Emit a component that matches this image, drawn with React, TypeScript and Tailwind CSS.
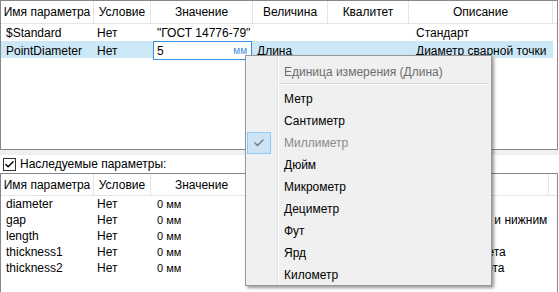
import { Check } from "lucide-react";

type Row = { name: string; cond: string; value: string; unit?: string; kind?: string; desc: string };

const topRows: Row[] = [
  { name: "$Standard", cond: "Нет", value: "\"ГОСТ 14776-79\"", desc: "Стандарт" },
  { name: "PointDiameter", cond: "Нет", value: "5", unit: "мм", kind: "Длина", desc: "Диаметр сварной точки" },
];

const inherited: Row[] = [
  { name: "diameter", cond: "Нет", value: "0 мм", desc: "" },
  { name: "gap", cond: "Нет", value: "0 мм", desc: "Зазор между верхним и нижним пакетом" },
  { name: "length", cond: "Нет", value: "0 мм", desc: "" },
  { name: "thickness1", cond: "Нет", value: "0 мм", desc: "Толщина первого пакета" },
  { name: "thickness2", cond: "Нет", value: "0 мм", desc: "Толщина второго пакета" },
];

const units = ["Метр", "Сантиметр", "Миллиметр", "Дюйм", "Микрометр", "Дециметр", "Фут", "Ярд", "Километр"];

const cols = "grid grid-cols-[93px_57px_102px_75px_81px_144px_1fr]";
const lowerCols = "grid grid-cols-[93px_57px_102px_60px_53px_183px_1fr]";

export default function App() {
  return (
    <div
      className="relative h-[292px] w-[559px] overflow-hidden bg-white text-[12px] leading-none text-black"
      style={{ fontFamily: '"Liberation Sans", Arial, sans-serif' }}
    >
      {/* parameters grid */}
      <div className="h-[150px] w-[558px] border border-[#828790]">
        <div className={`${cols} h-[23px] border-b border-[#e5e5e5] bg-white`}>
          {["Имя параметра", "Условие", "Значение", "Величина", "Квалитет", "Описание", ""].map((label, i) => (
            <div
              key={i}
              className={`flex items-center justify-center overflow-hidden whitespace-nowrap ${i < 6 ? "border-r border-[#e5e5e5]" : ""}`}
            >
              {label}
            </div>
          ))}
        </div>
        {topRows.map((row) => {
          const selected = !!row.unit;
          return (
            <div key={row.name} className={`${cols} h-[17px] items-center ${selected ? "bg-[#cce8f6]" : ""}`}>
              <div className="whitespace-nowrap pl-[5px]">{row.name}</div>
              <div className="pl-[3px]">{row.cond}</div>
              <div className="flex h-full items-center">
                {row.unit ? (
                  <div className="ml-[2px] flex h-[19px] w-[99px] items-center justify-between border border-[#3d8ee0] bg-white pl-[3px] pr-[4px]">
                    <span>{row.value}</span>
                    <span className="text-[10px] text-[#3c8ce0]">{row.unit}</span>
                  </div>
                ) : (
                  <span className="pl-[6px]">{row.value}</span>
                )}
              </div>
              <div className="pl-[4px]">{row.kind ?? ""}</div>
              <div />
              <div className="whitespace-nowrap pl-[7px]">{row.desc}</div>
              <div className={selected ? "h-full bg-white" : ""} />
            </div>
          );
        })}
      </div>

      <div className="h-[5px] bg-[#f0f0f0]" />

      <label className="flex h-[18px] items-center gap-[4px] pl-[3px]">
        <span className="flex h-[13px] w-[13px] items-center justify-center border border-[#333]">
          <Check size={11} strokeWidth={3} className="text-black" />
        </span>
        <span>Наследуемые параметры:</span>
      </label>

      {/* inherited grid */}
      <div className="h-[130px] w-[558px] border border-[#828790]">
        <div className={`${lowerCols} h-[22px] border-b border-[#e5e5e5]`}>
          {["Имя параметра", "Условие", "Значение", "", "", "", ""].map((label, i) => (
            <div
              key={i}
              className={`flex items-center justify-center whitespace-nowrap ${i < 6 ? "border-r border-[#e5e5e5]" : ""}`}
            >
              {label}
            </div>
          ))}
        </div>
        {inherited.map((row) => (
          <div key={row.name} className={`${lowerCols} h-[16px] items-center`}>
            <div className="pl-[5px]">{row.name}</div>
            <div className="pl-[3px]">{row.cond}</div>
            <div className="pl-[6px] text-[11px]">{row.value}</div>
            <div />
            <div />
            <div className="overflow-hidden whitespace-nowrap pl-[3px]">{row.desc}</div>
            <div />
          </div>
        ))}
      </div>

      {/* unit popup menu */}
      <div className="absolute left-[245px] top-[55px] h-[231px] w-[247px] border border-[#979797] bg-[#f0f0f0] shadow-[2px_2px_3px_rgba(0,0,0,0.4)]">
        <div className="absolute bottom-0 left-[31px] top-0 w-[1px] bg-[#e2e3e3]" />
        <div className="absolute bottom-0 left-[32px] top-0 w-[1px] bg-white" />
        <div className="relative pt-[5px]">
          <div className="flex h-[22px] items-center pl-[38px] text-[#6d6d6d]">Единица измерения (Длина)</div>
          <div className="ml-[33px] mr-[2px] h-[1px] bg-[#d7d7d7]" />
          <div className="mb-[3px] ml-[33px] mr-[2px] h-[1px] bg-white" />
          {units.map((u) => {
            const checked = u === "Миллиметр";
            return (
              <div key={u} className="relative flex h-[22px] items-center pl-[38px]">
                {checked ? (
                  <span className="absolute left-[1px] top-0 flex h-[22px] w-[24px] items-center justify-center border border-[#90c8f6] bg-[#cce4f7]">
                    <Check size={12} strokeWidth={3} className="text-[#7a7a7a]" />
                  </span>
                ) : null}
                <span className={checked ? "text-[#8a8a8a]" : "text-black"}>{u}</span>
              </div>
            );
          })}
        </div>
      </div>
    </div>
  );
}
